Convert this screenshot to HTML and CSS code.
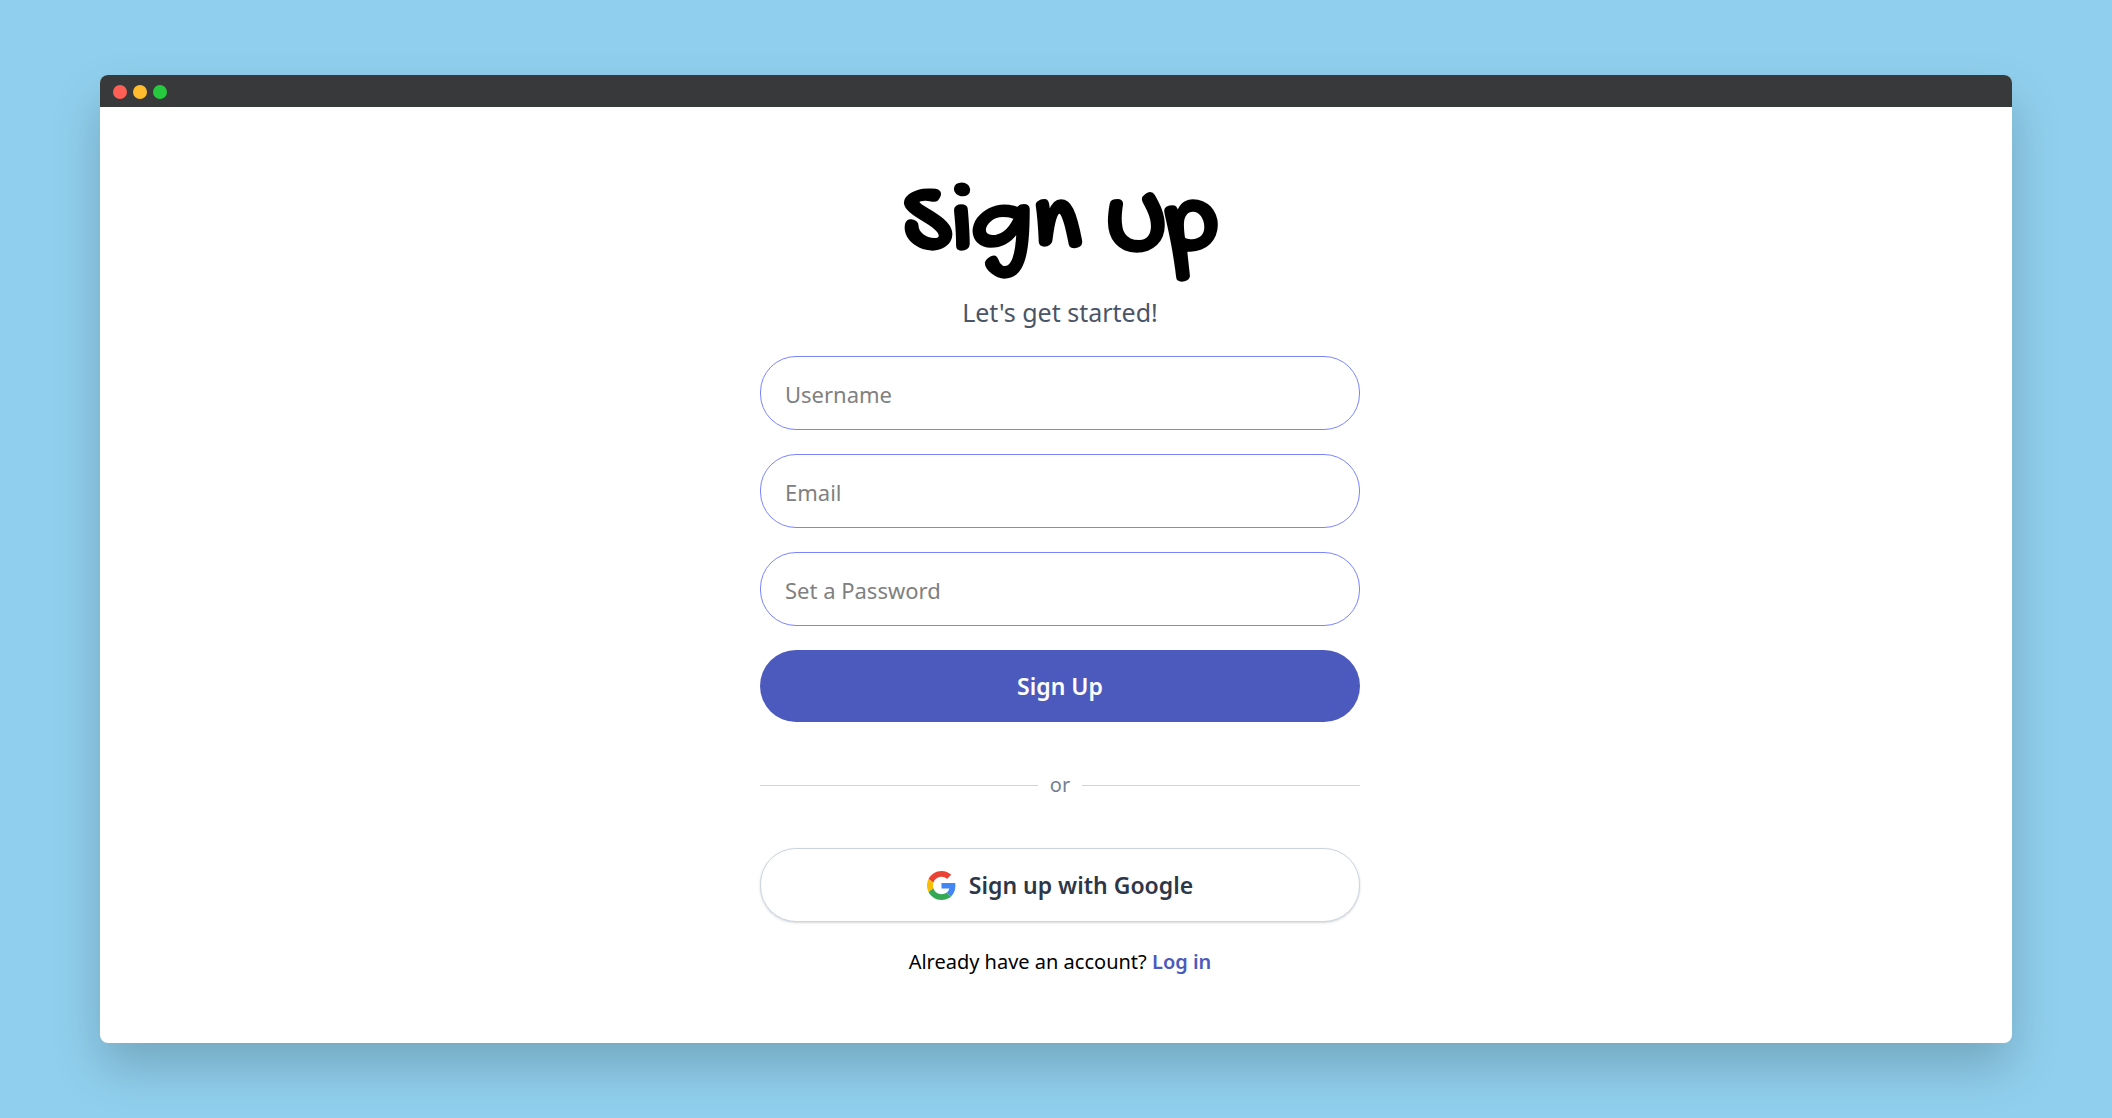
FILE: index.html
```html
<!DOCTYPE html>
<html lang="en">
<head>
<meta charset="utf-8">
<meta name="viewport" content="width=device-width, initial-scale=1">
<title>Sign Up</title>
<link rel="stylesheet" href="styles.css">
</head>
<body>
<div class="window">
  <div class="titlebar" aria-hidden="true">
    <span class="dot dot-close"></span>
    <span class="dot dot-minimize"></span>
    <span class="dot dot-zoom"></span>
  </div>
  <main class="content">
    <div class="panel">
      <h1 class="title">Sign Up</h1>
      <p class="subtitle">Let's get started!</p>
      <form class="form">
        <input class="field" type="text" placeholder="Username" aria-label="Username">
        <input class="field" type="email" placeholder="Email" aria-label="Email">
        <input class="field" type="password" placeholder="Set a Password" aria-label="Set a Password">
        <button class="button button-primary" type="submit">Sign Up</button>
      </form>
      <div class="divider">or</div>
      <button class="button button-google" type="button">
        <svg class="google-icon" viewBox="0 0 48 48" aria-hidden="true">
          <path fill="#EA4335" d="M24 9.500c3.540 0 6.710 1.220 9.210 3.600l6.850-6.850C35.900 2.380 30.470 0 24 0 14.620 0 6.510 5.380 2.560 13.220l7.980 6.190C12.430 13.720 17.740 9.500 24 9.500z"/>
          <path fill="#4285F4" d="M46.980 24.550c0-1.570-.15-3.090-.38-4.550H24v9.020h12.940c-.58 2.960-2.260 5.480-4.780 7.180l7.730 6c4.510-4.180 7.090-10.360 7.090-17.650z"/>
          <path fill="#FBBC05" d="M10.530 28.590c-.48-1.450-.76-2.990-.76-4.590s.27-3.140.76-4.590l-7.980-6.190C.92 16.460 0 20.120 0 24c0 3.880.92 7.540 2.560 10.780l7.970-6.190z"/>
          <path fill="#34A853" d="M24 48c6.480 0 11.930-2.130 15.890-5.810l-7.730-6c-2.150 1.450-4.920 2.300-8.160 2.300-6.260 0-11.570-4.220-13.470-9.910l-7.980 6.190C6.510 42.620 14.620 48 24 48z"/>
        </svg>
        Sign up with Google
      </button>
      <p class="login">Already have an account? <a class="login-link" href="#">Log in</a></p>
    </div>
  </main>
</div>
</body>
</html>
```
FILE: styles.css
```css
* {
  box-sizing: border-box;
}

body {
  margin: 0;
  min-height: 100vh;
  padding: 75px 100px;
  display: flex;
  background: #90d0ee;
  color: #000;
  font-family: "Segoe UI", "Noto Sans", "Open Sans", sans-serif;
}

.window {
  flex: 1;
  display: flex;
  flex-direction: column;
  border-radius: 8px;
  overflow: hidden;
  background: #fff;
  box-shadow: 0 24px 50px rgba(0, 0, 0, 0.2);
}

.titlebar {
  height: 32px;
  padding: 2px 13px 0;
  display: flex;
  align-items: center;
  gap: 6px;
  background: #38393a;
}

.dot {
  width: 14px;
  height: 14px;
  border-radius: 50%;
}

.dot-close { background: #ff5f56; }
.dot-minimize { background: #ffbd2e; }
.dot-zoom { background: #27c93f; }

.content {
  flex: 1;
  padding: 56px 0 64px 8px;
}

.panel {
  width: 100%;
  max-width: 600px;
  margin: 0 auto;
  text-align: center;
}

.title {
  margin: 0;
  font-family: "Gochi Hand", "Comic Sans MS", "Comic Neue", cursive;
  font-size: 104px;
  font-weight: 700;
  line-height: 128px;
}

.subtitle {
  margin: 0;
  color: #4a5568;
  font-size: 25px;
  line-height: 42px;
}

.form {
  margin-top: 23px;
  display: flex;
  flex-direction: column;
  gap: 24px;
}

.field {
  width: 100%;
  height: 74px;
  padding: 2px 24px 0;
  border: 1px solid #7b84ff;
  border-radius: 36px;
  background: #fff;
  font: inherit;
  font-size: 22px;
}

.field::placeholder {
  color: #808080;
  opacity: 1;
}

.button {
  width: 100%;
  height: 72px;
  padding: 0 24px;
  border: 0;
  border-radius: 36px;
  display: flex;
  align-items: center;
  justify-content: center;
  gap: 13px;
  font: inherit;
  font-size: 23px;
  font-weight: 600;
}

.button-primary {
  background: #4c5abd;
  color: #fff;
}

.divider {
  margin: 48px 0;
  display: flex;
  align-items: center;
  gap: 12px;
  color: #718096;
  font-size: 20px;
  line-height: 30px;
}

.divider::before,
.divider::after {
  content: "";
  flex: 1;
  height: 1px;
  background: #cbd5e0;
}

.button-google {
  height: 74px;
  border: 1px solid #cbd5e0;
  background: #fff;
  color: #2d3748;
  box-shadow: 0 1px 3px rgba(0, 0, 0, 0.1), 0 1px 2px rgba(0, 0, 0, 0.06);
}

.google-icon {
  width: 29px;
  height: 29px;
}

.login {
  margin: 24px 0 0;
  font-size: 20px;
  line-height: 32px;
}

.login-link {
  color: #4c5abd;
  font-weight: 600;
  text-decoration: none;
}
```
